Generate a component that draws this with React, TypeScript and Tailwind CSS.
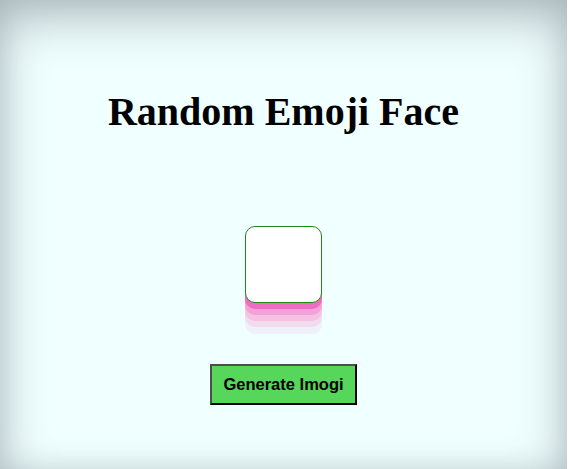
import React from "react";

const App = () => {
  return (
    <div className="min-h-screen bg-white">
      <div className="flex min-h-screen w-[567px] flex-col items-center bg-[#f0ffff] shadow-[inset_0_18px_50px_rgba(60,70,80,0.35),inset_0_0_26px_rgba(70,100,110,0.13)]">
        <h1 className="mt-[89px] font-['Liberation_Serif',serif] text-[40px] font-bold leading-[46px] text-black">
          Random Emoji Face
        </h1>

        <div className="mt-[91px] h-[77px] w-[77px] rounded-[10px] border border-[#1a8a1a] bg-white shadow-[0_6px_0_#f06cc4,0_12px_0_#f3a2d8,0_18px_0_#f5c2e4,0_24px_0_#f1dcef,0_31px_0_#eff0fb]" />

        <button className="mt-[61px] h-[41px] w-[147px] border-2 border-b-black border-l-[#4d4d4d] border-r-black border-t-[#4d4d4d] bg-[#56d65a] font-['Liberation_Sans',Arial,sans-serif] text-[16.5px] font-bold text-black">
          Generate Imogi
        </button>
      </div>
    </div>
  );
};

export default App;
